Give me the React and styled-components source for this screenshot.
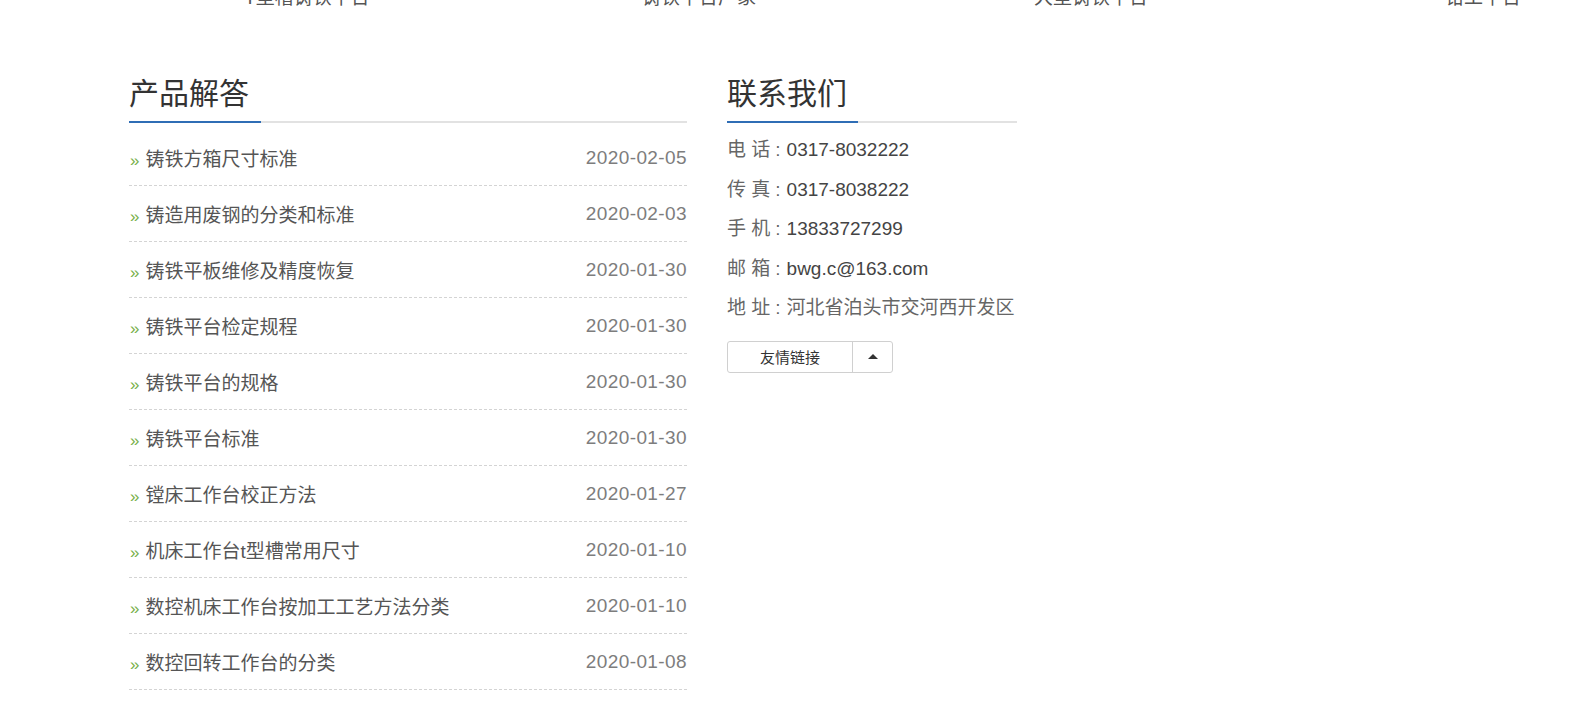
import React from 'react'
import styled, { createGlobalStyle } from 'styled-components'

const GlobalStyle = createGlobalStyle`
  body {
    margin: 0;
    background: #fff;
    font-family: "Liberation Sans", Arial, "Noto Sans CJK SC", sans-serif;
    color: #555;
  }
`

const TopStrip = styled.div`
  height: 12px;
  overflow: hidden;
  width: 1575px;
`

const TopRow = styled.div`
  display: flex;
  margin-top: -14px;
  margin-left: 111px;
`

const TopItem = styled.div`
  flex: 0 0 392px;
  text-align: center;
  font-size: 19px;
  line-height: 24px;
  color: #555;
`

const Main = styled.div`
  display: flex;
  gap: 40px;
  padding: 65px 0 0 129px;
`

const Column = styled.div`
  width: ${({ $width }) => $width}px;
`

const Heading = styled.h2`
  position: relative;
  margin: 0;
  font-size: 30px;
  font-weight: normal;
  line-height: 34px;
  color: #333;
  padding-bottom: 10px;
  border-bottom: 2px solid #e2e2e2;

  &::after {
    content: '';
    position: absolute;
    left: 0;
    bottom: -2px;
    width: ${({ $bar }) => $bar}px;
    height: 2px;
    background: #2f6db5;
  }
`

const List = styled.ul`
  list-style: none;
  margin: 7px 0 0;
  padding: 0;
`

const Row = styled.li`
  display: flex;
  align-items: center;
  justify-content: space-between;
  height: 55px;
  border-bottom: 1px dashed #d4d4d4;
  font-size: 19px;
`

const Title = styled.span`
  color: #555;
`

const Arrow = styled.span`
  color: #77b04a;
  font-size: 17px;
  margin: 0 6px 0 1px;
`

const Date = styled.span`
  color: #7d7d7d;
  letter-spacing: 0.4px;
`

const Info = styled.div`
  margin-top: 7px;
`

const InfoLine = styled.p`
  margin: 0;
  line-height: 39.5px;
  font-size: 19px;
  color: #666;
  white-space: nowrap;
`

const Colon = styled.span`
  margin: 0 6px 0 5px;
`

const Value = styled.span`
  color: ${({ $dark }) => ($dark ? '#444' : '#666')};
`

const LinkButton = styled.div`
  display: flex;
  width: 164px;
  height: 30px;
  margin-top: 13px;
  border: 1px solid #d0d0d0;
  border-radius: 3px;
  font-size: 15px;
  color: #333;
`

const LinkLabel = styled.div`
  flex: 1;
  display: flex;
  align-items: center;
  justify-content: center;
  border-right: 1px solid #d0d0d0;
`

const Toggle = styled.div`
  width: 39px;
  display: flex;
  align-items: center;
  justify-content: center;
`

const Caret = styled.span`
  width: 0;
  height: 0;
  border-left: 5px solid transparent;
  border-right: 5px solid transparent;
  border-bottom: 5px solid #333;
`

const tops = ['T型槽铸铁平台', '铸铁平台厂家', '大型铸铁平台', '钳工平台']

const answers = [
  ['铸铁方箱尺寸标准', '2020-02-05'],
  ['铸造用废钢的分类和标准', '2020-02-03'],
  ['铸铁平板维修及精度恢复', '2020-01-30'],
  ['铸铁平台检定规程', '2020-01-30'],
  ['铸铁平台的规格', '2020-01-30'],
  ['铸铁平台标准', '2020-01-30'],
  ['镗床工作台校正方法', '2020-01-27'],
  ['机床工作台t型槽常用尺寸', '2020-01-10'],
  ['数控机床工作台按加工工艺方法分类', '2020-01-10'],
  ['数控回转工作台的分类', '2020-01-08'],
]

const contacts = [
  ['电 话', '0317-8032222', true],
  ['传 真', '0317-8038222', true],
  ['手 机', '13833727299', true],
  ['邮 箱', 'bwg.c@163.com', true],
  ['地 址', '河北省泊头市交河西开发区', false],
]

export default function App() {
  return (
    <>
      <GlobalStyle />
      <TopStrip>
        <TopRow>
          {tops.map((t) => (
            <TopItem key={t}>{t}</TopItem>
          ))}
        </TopRow>
      </TopStrip>
      <Main>
        <Column $width={558}>
          <Heading $bar={132}>产品解答</Heading>
          <List>
            {answers.map(([title, date]) => (
              <Row key={title}>
                <Title>
                  <Arrow>»</Arrow>
                  {title}
                </Title>
                <Date>{date}</Date>
              </Row>
            ))}
          </List>
        </Column>
        <Column $width={290}>
          <Heading $bar={131}>联系我们</Heading>
          <Info>
            {contacts.map(([label, value, dark]) => (
              <InfoLine key={label}>
                {label}
                <Colon>:</Colon>
                <Value $dark={dark}>{value}</Value>
              </InfoLine>
            ))}
          </Info>
          <LinkButton>
            <LinkLabel>友情链接</LinkLabel>
            <Toggle>
              <Caret />
            </Toggle>
          </LinkButton>
        </Column>
      </Main>
    </>
  )
}
